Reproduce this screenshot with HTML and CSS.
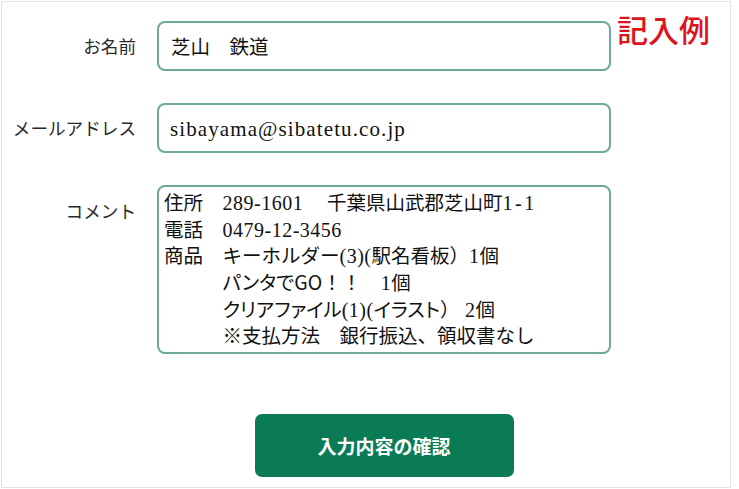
FILE: index.html
```html
<!DOCTYPE html>
<html lang="ja">
<head>
<meta charset="utf-8">
<link rel="stylesheet" href="styles.css">
</head>
<body>
<div class="frame">
  <div class="form">
    <div class="label">お名前</div>
    <div class="field field-name">芝山　鉄道</div>
    <div class="example">記入例</div>

    <div class="label">メールアドレス</div>
    <div class="field field-mail">sibayama@sibatetu.co.jp</div>
    <div></div>

    <div class="label label-top">コメント</div>
    <div class="field field-comment">
      <div class="line">住所　<span class="lat">289-1601</span>　 千葉県山武郡芝山町<span class="lat wide">1-1</span></div>
      <div class="line">電話　<span class="lat">0479-12-3456</span></div>
      <div class="line">商品　キーホルダー<span class="lat">(3)(</span>駅名看板）<span class="lat">1</span>個</div>
      <div class="line">　　　<span class="prop">パンタで</span>GO！！　<span class="lat">1</span>個</div>
      <div class="line">　　　<span class="prop">クリアファイル</span><span class="lat">(1)(</span><span class="prop">イラスト</span>）<span class="lat"> 2</span>個</div>
      <div class="line">　　　※支払方法　銀行振込、領収書なし</div>
    </div>
    <div></div>

    <div></div>
    <div class="actions"><button class="confirm">入力内容の確認</button></div>
    <div></div>
  </div>
</div>
</body>
</html>
```

FILE: styles.css
```css
html, body {
  margin: 0;
  padding: 0;
  background: #fff;
}
.frame {
  margin: 1px 0 0 1px;
  width: 728px;
  height: 485px;
  border: 1px solid #e3e3e3;
  box-sizing: content-box;
}
.form {
  display: grid;
  grid-template-columns: 134px 454px 1fr;
  column-gap: 21px;
  row-gap: 32px;
  padding-top: 19px;
  font-family: "Noto Sans CJK JP", sans-serif;
}
.label {
  text-align: right;
  font-size: 17.6px;
  color: #2a2a2a;
  align-self: center;
  line-height: 24px;
}
.label-top {
  align-self: start;
  padding-top: 14px;
}
.field {
  border: 2px solid #6ea999;
  border-radius: 8px;
  box-sizing: border-box;
  color: #111;
}
.field-name {
  height: 50px;
  padding: 0 12px;
  font-size: 19.5px;
  line-height: 46px;
}
.field-mail {
  height: 50px;
  padding: 0 11px;
  font-family: "Liberation Serif", serif;
  font-size: 21px;
  letter-spacing: 1.1px;
  line-height: 48px;
}
.field-comment {
  height: 169px;
  padding: 2px 5px;
  font-family: "Noto Sans CJK JP", sans-serif;
  font-size: 19.5px;
  white-space: nowrap;
}
.line {
  white-space: pre;
  height: 26.7px;
  line-height: 26.7px;
}
.lat {
  font-family: "Liberation Serif", serif;
  font-size: 20px;
  letter-spacing: 0.5px;
  line-height: 1;
}
.wide {
  letter-spacing: 2.5px;
}
.prop {
  font-feature-settings: "palt";
}
.example {
  margin-left: -15px;
  margin-top: -10px;
  font-size: 31px;
  line-height: 36px;
  color: #dc1420;
  font-weight: 500;
  align-self: start;
}
.actions {
  display: flex;
  justify-content: center;
  padding-top: 28px;
}
.confirm {
  width: 259px;
  height: 63px;
  border: none;
  border-radius: 7px;
  background: #0b7b56;
  color: #fff;
  font-family: "Noto Sans CJK JP", sans-serif;
  font-weight: 700;
  font-size: 19px;
  cursor: pointer;
}
```
